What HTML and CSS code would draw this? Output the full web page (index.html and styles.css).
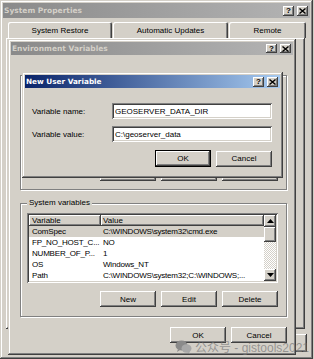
FILE: index.html
```html
<!DOCTYPE html>
<html lang="en">
<head>
    <meta charset="UTF-8">
    <meta name="viewport" content="width=device-width, initial-scale=1.0">
    <title>Environment Variables</title>
    <link rel="stylesheet" href="styles.css">
</head>
<body>
    <!-- back window -->
    <div class="win sysprops">
        <div class="titlebar inactive">
            <span class="title">System Properties</span>
            <div class="tbtns">
                <span class="tbtn">?</span>
                <span class="tbtn"><svg width="7" height="6" viewBox="0 0 7 6"><path d="M0.5 0.5l6 5M6.5 0.5l-6 5" stroke="#000" stroke-width="1.4"/></svg></span>
            </div>
        </div>
        <div class="tabs">
            <div class="tab tab-restore">System Restore</div>
            <div class="tab tab-updates">Automatic Updates</div>
            <div class="tab tab-remote">Remote</div>
        </div>
        <div class="tabpane"></div>
        <div class="btnrow sys-buttons">
            <button class="btn">OK</button>
            <button class="btn">Cancel</button>
            <button class="btn apply">Apply</button>
        </div>
    </div>

    <!-- environment variables -->
    <div class="win env">
        <div class="titlebar inactive env-title">
            <span class="title">Environment Variables</span>
            <div class="tbtns">
                <span class="tbtn">?</span>
                <span class="tbtn"><svg width="7" height="6" viewBox="0 0 7 6"><path d="M0.5 0.5l6 5M6.5 0.5l-6 5" stroke="#000" stroke-width="1.4"/></svg></span>
            </div>
        </div>
        <div class="env-body">
            <div class="group user-group">
                <span class="group-label">User variables for Administrator</span>
                <div class="btnrow">
                    <button class="btn">New</button>
                    <button class="btn">Edit</button>
                    <button class="btn">Delete</button>
                </div>
            </div>
            <div class="group sys-group">
                <span class="group-label">System variables</span>
                <div class="list">
                    <div class="list-main">
                        <div class="list-head">
                            <div class="hcell col1">Variable</div>
                            <div class="hcell col2">Value</div>
                        </div>
                        <div class="row selected"><div class="col1">ComSpec</div><div class="col2">C:\WINDOWS\system32\cmd.exe</div></div>
                        <div class="row"><div class="col1">FP_NO_HOST_C...</div><div class="col2">NO</div></div>
                        <div class="row"><div class="col1">NUMBER_OF_P...</div><div class="col2">1</div></div>
                        <div class="row"><div class="col1">OS</div><div class="col2">Windows_NT</div></div>
                        <div class="row"><div class="col1">Path</div><div class="col2">C:\WINDOWS\system32;C:\WINDOWS;...</div></div>
                    </div>
                    <div class="scrollbar">
                        <div class="sb-btn"><svg width="7" height="4" viewBox="0 0 7 4"><path d="M3.5 0L7 4H0z" fill="#000"/></svg></div>
                        <div class="sb-thumb"></div>
                        <div class="sb-track"></div>
                        <div class="sb-btn"><svg width="7" height="4" viewBox="0 0 7 4"><path d="M0 0h7L3.5 4z" fill="#000"/></svg></div>
                    </div>
                </div>
                <div class="btnrow list-buttons">
                    <button class="btn">New</button>
                    <button class="btn">Edit</button>
                    <button class="btn">Delete</button>
                </div>
            </div>
            <div class="btnrow env-buttons">
                <button class="btn">OK</button>
                <button class="btn">Cancel</button>
            </div>
        </div>
    </div>

    <!-- new user variable dialog -->
    <div class="win dialog">
        <div class="titlebar active dialog-title">
            <span class="title">New User Variable</span>
            <div class="tbtns">
                <span class="tbtn">?</span>
                <span class="tbtn"><svg width="7" height="6" viewBox="0 0 7 6"><path d="M0.5 0.5l6 5M6.5 0.5l-6 5" stroke="#000" stroke-width="1.4"/></svg></span>
            </div>
        </div>
        <div class="dialog-body">
            <div class="field">
                <label for="var-name">Variable name:</label>
                <input type="text" id="var-name" value="GEOSERVER_DATA_DIR">
            </div>
            <div class="field">
                <label for="var-value">Variable value:</label>
                <input type="text" id="var-value" value="C:\geoserver_data">
            </div>
            <div class="btnrow dialog-buttons">
                <button class="btn default">OK</button>
                <button class="btn">Cancel</button>
            </div>
        </div>
    </div>

    <div class="watermark">
        <svg width="17" height="14" viewBox="0 0 17 14">
            <ellipse cx="6.5" cy="5.5" rx="6" ry="5" fill="#8a8a8a"/>
            <path d="M3 9l-1 3 3-2z" fill="#8a8a8a"/>
            <ellipse cx="11.5" cy="8.5" rx="5" ry="4.2" fill="#a8a8a8"/>
            <path d="M14 11.5l1 2-3-1.2z" fill="#a8a8a8"/>
        </svg>
        <span>公众号 - gistools2021</span>
    </div>
</body>
</html>
```
FILE: styles.css
```css
* {
    box-sizing: border-box;
}
body {
    margin: 0;
    width: 314px;
    height: 359px;
    overflow: hidden;
    position: relative;
    background: #d4d0c8;
    font-family: "Liberation Sans", Arial, sans-serif;
    font-size: 8px;
    color: #000;
}

/* classic window frame */
.win {
    position: absolute;
    display: flex;
    flex-direction: column;
    padding: 3px;
    background: #d4d0c8;
    overflow: hidden;
    box-shadow: inset -1px -1px #404040, inset 1px 1px #d4d0c8,
                inset -2px -2px #808080, inset 2px 2px #fff;
}
.titlebar {
    flex: none;
    display: flex;
    align-items: center;
    justify-content: space-between;
    padding: 0 2px 0 1px;
}
.titlebar .title {
    font-family: "DejaVu Sans", sans-serif;
    font-weight: bold;
    font-size: 7.5px;
}
.inactive {
    background: linear-gradient(to right, #8a8a8a, #b4b4b4);
    color: #d4d0c8;
}
.active {
    background: linear-gradient(to right, #0a246a, #a6caf0);
    color: #fff;
}
.tbtns {
    display: flex;
    gap: 3px;
}
.tbtn {
    width: 11px;
    height: 10px;
    display: flex;
    align-items: center;
    justify-content: center;
    background: #d4d0c8;
    color: #000;
    font-weight: bold;
    font-size: 8px;
    box-shadow: inset -1px -1px #404040, inset 1px 1px #fff,
                inset -2px -2px #808080;
}

/* buttons */
.btn {
    width: 56px;
    height: 16px;
    padding: 0;
    border: none;
    background: #d4d0c8;
    font: inherit;
    color: #000;
    box-shadow: inset -1px -1px #404040, inset 1px 1px #fff,
                inset -2px -2px #808080, inset 2px 2px #d4d0c8;
}
.btn.default {
    height: 17px;
    border: 1px solid #000;
}
.btnrow {
    display: flex;
    justify-content: flex-end;
    align-items: center;
    gap: 5px;
}

/* system properties */
.sysprops {
    left: 0;
    top: 0;
    width: 313px;
    height: 359px;
}
.sysprops .titlebar {
    height: 15px;
}
.tabs {
    display: flex;
    flex: none;
    gap: 1px;
    margin-top: 4px;
    padding-left: 5px;
    height: 16px;
}
.tab {
    display: flex;
    align-items: center;
    justify-content: center;
    border-radius: 2px 2px 0 0;
    box-shadow: inset 1px 1px #fff, inset -1px 0 #404040, inset -2px 0 #808080;
}
.tab-restore { width: 104px; }
.tab-updates { width: 115px; }
.tab-remote { width: 77px; }
.tabpane {
    flex: none;
    margin-left: 3px;
    width: 299px;
    height: 291px;
    box-shadow: inset -1px -1px #404040, inset 1px 1px #fff,
                inset -2px -2px #808080;
}
.sys-buttons {
    margin-top: 5px;
    padding-right: 3px;
}
.sys-buttons .btn {
    height: 18px;
}

/* environment variables */
.env {
    left: 8px;
    top: 39px;
    width: 288px;
    height: 316px;
}
.env-title {
    height: 13px;
}
.env-title .tbtn {
    height: 9px;
}
.env-body {
    display: flex;
    flex-direction: column;
    padding: 0 6px 0 9px;
}
.group {
    position: relative;
    border: 1px solid #808080;
    box-shadow: inset 1px 1px #fff, 1px 1px #fff;
}
.group-label {
    position: absolute;
    top: -6px;
    left: 6px;
    padding: 0 2px;
    background: #d4d0c8;
    line-height: 10px;
}
.user-group {
    margin-top: 20px;
    height: 115px;
    display: flex;
    flex-direction: column;
    justify-content: flex-end;
    padding: 0 8px 8px 0;
}
.sys-group {
    margin-top: 13px;
    height: 114px;
    padding: 9px 8px 9px 6px;
    display: flex;
    flex-direction: column;
}
.list-buttons {
    margin-top: 8px;
}
.env-buttons {
    margin-top: 10px;
}

/* list view */
.list {
    height: 70px;
    display: flex;
    padding: 2px;
    background: #fff;
    overflow: hidden;
    box-shadow: inset 1px 1px #808080, inset -1px -1px #fff,
                inset 2px 2px #404040, inset -2px -2px #d4d0c8;
}
.list-main {
    flex: 1;
    display: flex;
    flex-direction: column;
    overflow: hidden;
}
.list-head, .row {
    display: flex;
    flex: none;
    height: 11px;
    align-items: center;
    white-space: nowrap;
}
.row {
    letter-spacing: -0.2px;
}
.col1 {
    width: 72px;
    flex: none;
    padding-left: 3px;
    overflow: hidden;
}
.col2 {
    flex: 1;
    padding-left: 2px;
    overflow: hidden;
}
.hcell {
    height: 11px;
    display: flex;
    align-items: center;
    background: #d4d0c8;
    box-shadow: inset -1px -1px #404040, inset 1px 1px #fff,
                inset -2px -2px #808080;
}
.row.selected {
    background: #d4d0c8;
}
.scrollbar {
    width: 12px;
    flex: none;
    display: flex;
    flex-direction: column;
}
.sb-btn, .sb-thumb {
    flex: none;
    height: 12px;
    display: flex;
    align-items: center;
    justify-content: center;
    background: #d4d0c8;
    box-shadow: inset -1px -1px #404040, inset 1px 1px #fff,
                inset -2px -2px #808080;
}
.sb-thumb {
    height: 15px;
}
.sb-track {
    flex: 1;
    background: repeating-conic-gradient(#fff 0 25%, #d4d0c8 0 50%) 0 0 / 2px 2px;
}

/* new user variable */
.dialog {
    left: 22px;
    top: 72px;
    width: 261px;
    height: 106px;
}
.dialog-title {
    height: 13px;
}
.dialog-title .title {
    font-size: 7.3px;
}
.dialog-body {
    display: flex;
    flex-direction: column;
    gap: 7px;
    padding: 15px 8px 0 7px;
}
.field {
    display: flex;
    align-items: center;
}
.field label {
    width: 80px;
    flex: none;
}
.field input {
    flex: 1;
    min-width: 0;
    height: 16px;
    border: none;
    padding: 0 3px;
    font: inherit;
    background: #fff;
    outline: none;
    box-shadow: inset 1px 1px #808080, inset -1px -1px #fff,
                inset 2px 2px #404040, inset -2px -2px #d4d0c8;
}
.dialog-buttons {
    margin-top: 1px;
}

/* watermark over the screenshot */
.watermark {
    position: absolute;
    left: 175px;
    top: 338px;
    display: flex;
    align-items: center;
    gap: 3px;
    font-family: "Liberation Sans", "Noto Sans CJK SC", sans-serif;
    font-size: 12px;
    color: rgba(120, 120, 120, 0.7);
}
```
